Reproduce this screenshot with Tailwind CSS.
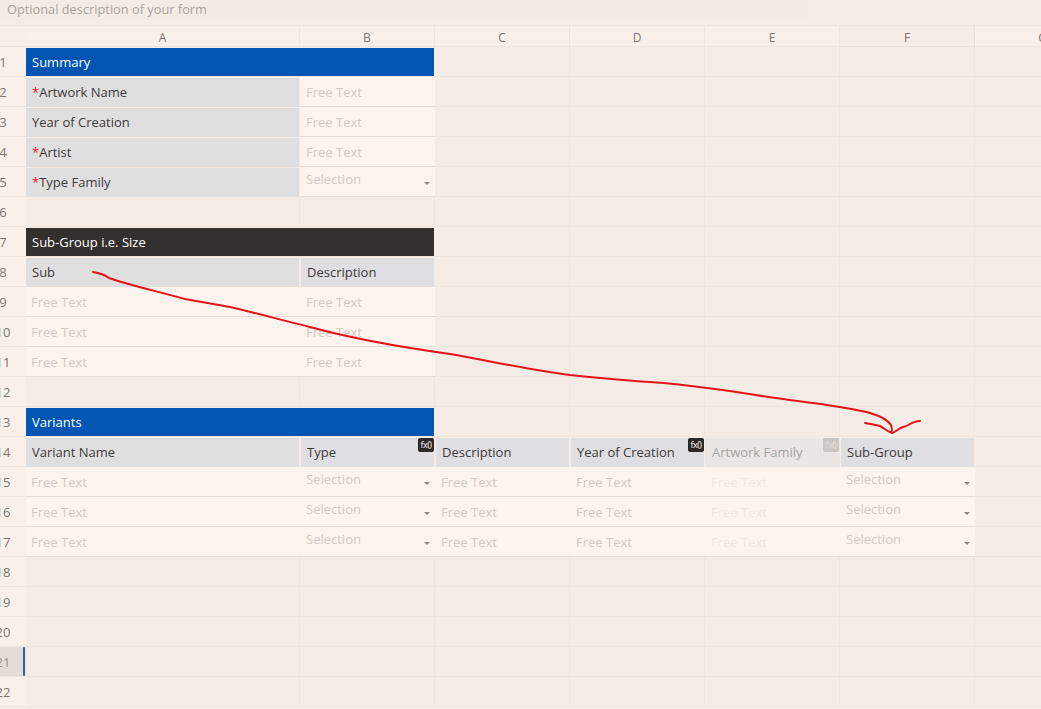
<!DOCTYPE html>
<html lang="en">

<head>
    <meta charset="UTF-8">
    <title>Form grid</title>
    <script src="https://cdn.jsdelivr.net/npm/@tailwindcss/browser@4"></script>
</head>

<body class="relative w-[1041px] h-[709px] overflow-hidden bg-[#f5ece6] font-['Open_Sans',sans-serif] text-[13px] text-[#3d3b3a]">
    <!--Description bar-->
    <div class="h-[26px] border-b border-[#efe6e0] pt-[1px]">
        <div class="w-[807px] h-[19px] bg-[#f4ebe5] pl-[7px] text-[12.8px] leading-[16px] text-[#aaa49f]">Optional description of your form</div>
    </div>

    <!--Sheet-->
    <div id="sheet" class="grid w-[1110px] grid-cols-[26px_274px_135px_135px_135px_135px_135px_135px] grid-rows-[21px] auto-rows-[30px]"></div>

    <!--Red annotation-->
    <svg class="absolute left-0 top-0 pointer-events-none" width="1041" height="709" fill="none" stroke="#e4131a" stroke-width="2" stroke-linecap="round" stroke-linejoin="round">
        <path d="M93 272 C100 273 105 275 109 278 C125 284 160 292 185 299 C200 302 215 304 230 307 C260 314 285 321 310 327 C350 338 400 347 450 354 C490 361 530 370 570 375 C600 378 630 381 650 382 C680 384 700 387 723 390 C755 395 785 400 813 403 C835 406 855 409 870 413 C880 416 888 420 891 425 C892 428 892 431 891 432"/>
        <path d="M865 423 C871 424 876 425 880 426 C884 428 888 432 892 433 C896 432 899 428 903 427 C907 426 909 425 912 423 C915 422 917 421 920 421"/>
    </svg>

    <script>
        const gridLine = "border-r border-b border-[#efe6e0]";
        const empty = `<div class="${gridLine}"></div>`;
        const caret = `<span class="absolute right-[5px] top-[15px] h-0 w-0 border-x-[3px] border-t-[3px] border-x-transparent border-t-[#8b8580]"></span>`;

        function title(text, color) {
            return `<div class="col-span-2 border-b border-[#efe6e0] pt-[1px] pr-[1px]"><div class="h-[28px] pl-[6px] leading-[28px] text-white ${color}">${text}</div></div>`;
        }
        function label(text, required) {
            const star = required ? `<span class="text-[#e01b22]">*</span>` : "";
            return `<div class="pt-[1px] pr-[1px]"><div class="relative h-[28.5px] bg-[#e0dfe0] pl-[6px] leading-[28px]">${star}${text}</div></div>`;
        }
        function heading(text) {
            return `<div class="relative pt-[1px] px-[1px]"><div class="h-[28.5px] bg-[#dfdee0] pl-[6px] leading-[28px]">${text}</div></div>`;
        }
        function badge(dim) {
            const tone = dim ? "bg-[#cbc6c2] text-[#e3dfdc]" : "bg-[#2b2928] text-white";
            return `<span class="absolute right-[1px] top-[1px] h-[14px] w-[16px] rounded-[2px] text-center text-[9px] leading-[14px] tracking-[-0.5px] ${tone}">fx()</span>`;
        }
        function free(tone, inset) {
            return `<div class="border-b border-[#e6dcd6] bg-[#fef4ee] ${inset || "pl-[6px]"} leading-[30px] ${tone || "text-[#d2cac5]"}">Free Text</div>`;
        }
        const selection = `<div class="relative border-b border-[#e6dcd6] bg-[#fef4ee] pl-[6px] leading-[24px] text-[#d2cac5]">Selection${caret}</div>`;
        function withBadge(cell, dim) {
            return cell.replace("</div></div>", `</div>${badge(dim)}</div>`);
        }

        const firstFree = free("", "pl-[5px]");
        const rows = {
            1: title("Summary", "bg-[#0255b0]"),
            2: label("Artwork Name", true) + free(),
            3: label("Year of Creation") + free(),
            4: label("Artist", true) + free(),
            5: label("Type Family", true) + selection,
            7: title("Sub-Group i.e. Size", "bg-[#33302e]"),
            8: label("Sub") + heading("Description"),
            9: firstFree + free(),
            10: firstFree + free(),
            11: firstFree + free(),
            13: title("Variants", "bg-[#0255b0]"),
            14: label("Variant Name") + withBadge(heading("Type"))
                + heading("Description") + withBadge(heading("Year of Creation"))
                + `<div class="relative pt-[1px]"><div class="h-[28.5px] bg-[#ebe6e3] pl-[7px] leading-[28px] text-[#a8a4a1]">Artwork Family</div>${badge(true)}</div>`
                + heading("Sub-Group"),
        };
        const variantRow = firstFree + selection + free() + free() + free("text-[#f0e7e2]") + selection;
        rows[15] = rows[16] = rows[17] = variantRow;
        const usedCols = { 1: 2, 2: 2, 3: 2, 4: 2, 5: 2, 7: 2, 8: 2, 9: 2, 10: 2, 11: 2, 13: 2, 14: 6, 15: 6, 16: 6, 17: 6 };

        // Column letters
        let html = `<div class="bg-[#f8efe9] border-b border-[#efe6e0]"></div>`;
        ["A", "B", "C", "D", "E"].forEach((c) => {
            html += `<div class="bg-[#f9f0ea] border-r border-b border-[#efe6e0] text-center text-[12px] leading-[23px] text-[#7c7773]">${c}</div>`;
        });
        html += `<div class="border-r border-b border-[#ebe2dc] text-center text-[12px] leading-[23px] text-[#7c7773]">F</div>`;
        html += `<div class="bg-[#f9f0ea] border-b border-[#efe6e0] text-center text-[12px] leading-[23px] text-[#7c7773]">G</div>`;

        // Rows with their number gutter
        for (let r = 1; r <= 22; r++) {
            const selected = r === 21;
            const gutter = selected ? "bg-[#e3dcd6] text-[#9a948f]" : "bg-[#f9f0ea] text-[#7c7773]";
            const bar = selected ? `<span class="absolute right-[1px] top-0 h-[29px] w-[2px] rounded-[1px] bg-[#2f66a8]"></span>` : "";
            html += `<div class="relative overflow-hidden border-b border-[#efe6e0] text-[13px] leading-[30px] ${gutter}"><div class="ml-[-22px] w-[50px] text-center">${r}</div>${bar}</div>`;
            html += rows[r] || "";
            for (let c = usedCols[r] || 0; c < 7; c++) html += empty;
        }
        document.getElementById("sheet").innerHTML = html;
    </script>
</body>

</html>
